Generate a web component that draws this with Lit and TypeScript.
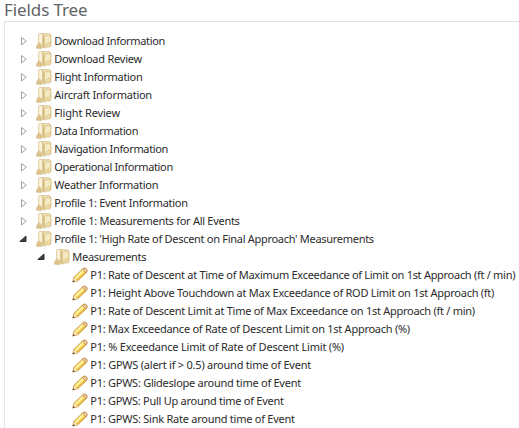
import { LitElement, html, svg, css } from 'lit';
import { customElement } from 'lit/decorators.js';

type Row = { level: number; kind: 'closed' | 'open' | 'leaf'; text: string; spacing: number };

const closed = (text: string, spacing: number): Row => ({ level: 0, kind: 'closed', text, spacing });
const leaf = (text: string, spacing: number): Row => ({ level: 2, kind: 'leaf', text, spacing });

const rows: Row[] = [
  closed('Download Information', -0.34),
  closed('Download Review', -0.23),
  closed('Flight Information', -0.33),
  closed('Aircraft Information', -0.26),
  closed('Flight Review', -0.16),
  closed('Data Information', -0.35),
  closed('Navigation Information', -0.34),
  closed('Operational Information', -0.34),
  closed('Weather Information', -0.27),
  closed('Profile 1: Event Information', -0.31),
  closed('Profile 1: Measurements for All Events', -0.28),
  { level: 0, kind: 'open', text: "Profile 1: 'High Rate of Descent on Final Approach' Measurements", spacing: -0.29 },
  { level: 1, kind: 'open', text: 'Measurements', spacing: -0.3 },
  leaf('P1: Rate of Descent at Time of Maximum Exceedance of Limit on 1st Approach (ft / min)', -0.285),
  leaf('P1: Height Above Touchdown at Max Exceedance of ROD Limit on 1st Approach (ft)', -0.27),
  leaf('P1: Rate of Descent Limit at Time of Max Exceedance on 1st Approach (ft / min)', -0.27),
  leaf('P1: Max Exceedance of Rate of Descent Limit on 1st Approach (%)', -0.26),
  leaf('P1: % Exceedance Limit of Rate of Descent Limit (%)', -0.21),
  leaf('P1: GPWS (alert if > 0.5) around time of Event', -0.23),
  leaf('P1: GPWS: Glideslope around time of Event', -0.26),
  leaf('P1: GPWS: Pull Up around time of Event', -0.27),
  leaf('P1: GPWS: Sink Rate around time of Event', -0.25),
];

const arrow = (kind: Row['kind']) =>
  kind === 'closed'
    ? svg`<path d="M3.5 4.5V12L8.2 8.2Z" fill="#fff" stroke="#a0a0a0"/>`
    : kind === 'open'
      ? svg`<path d="M8 5V10.5H1.8Z" fill="#404040" stroke="#222" stroke-width=".9"/>`
      : null;

const folder = html`<svg class="icon" viewBox="0 0 16 16">
  <path d="M2.5 1.2L3.5 .5H8V14L5 15.3H2.5Z" fill="#f0e2b7" stroke="#d8c695" stroke-width=".7"/>
  <path d="M3.3 1.4H6.3V11H3.3Z" fill="#fbf4dc"/>
  <path d="M.5 15.3V13.2L2.2 10.2H4.2L5.4 12.5V15.3Z" fill="#dcc48a" stroke="#cfb67d" stroke-width=".5"/>
  <path d="M6.6 .7H13.4L14.9 1.8V12.8L13.6 13.7H6.6Z" fill="#f0e2b6" stroke="#d0b980" stroke-width=".7"/>
  <path d="M6.8 2L8.6 3.2V15.2L6.8 14Z" fill="#d8c186"/>
  <path d="M8.6 3.4L9.8 2.7H14.8V12.9L13.5 14H10.5L8.6 15.4Z" fill="#e9d7a1" stroke="#d3bc82" stroke-width=".5"/>
  <path d="M9.1 3.8L10 3.2H14.2V8L9.1 10.5Z" fill="#f5eac6"/>
</svg>`;

const pencil = html`<svg class="icon" viewBox="0 0 16 16">
  <path d="M.9 14.9L1.9 10.3L10.6 2Q12.6.2 14.4 1.9Q16 3.6 14.3 5.7L5.7 13.8Z" fill="#f7cf50" stroke="#c08a3c" stroke-width=".8"/>
  <path d="M2.9 10.4L10.6 3.1L12.2 4.5L4.4 11.9Z" fill="#fff3a2"/>
  <path d="M5 13.2L13.2 5.5" stroke="#e8b03a" stroke-width=".9"/>
  <path d="M10.7 2.1L11.9 1.2Q13.2.7 14.4 1.9Q15.5 3.2 14.6 5L13.7 6Z" fill="#f3c7a2" stroke="#b9854c" stroke-width=".7"/>
  <path d="M1.2 14.6L2.1 10.9L3.8 11.8L5.2 13.7Z" fill="#f7e3c0"/>
  <path d="M.5 15.4L1.2 12.9L3.1 14.6Z" fill="#6e533a"/>
</svg>`;

@customElement('app-root')
export class AppRoot extends LitElement {
  static styles = css`
    :host { display: block; height: 428px; overflow: hidden; background: #fff; font-family: 'Noto Sans', sans-serif; }
    .page { display: flex; flex-direction: column; height: 428px; }
    h1 { margin: 0; padding-left: 4px; height: 21px; flex: none; font-size: 17px; line-height: 20px; font-weight: 400; letter-spacing: -0.1px; color: #626366; white-space: nowrap; }
    .panel { flex: 1; min-height: 0; margin-left: 4px; padding: 10px 0 0 13px; border-top: 1px solid #dfdfdf; border-left: 1px solid #e6e6e6; overflow: hidden; }
    .row { display: flex; align-items: center; height: 18px; white-space: nowrap; }
    .level-1 { padding-left: 18px; }
    .level-2 { padding-left: 36px; }
    .arrow { width: 16px; height: 16px; margin-right: 2px; flex: none; }
    .icon { width: 16px; height: 16px; flex: none; }
    .label { margin-left: 2.3px; font-size: 11px; line-height: 18px; color: #2b2b2b; }
  `;

  render() {
    return html`<div class="page">
      <h1>Fields Tree</h1>
      <div class="panel">
        ${rows.map(r => html`<div class="row level-${r.level}">
          <svg class="arrow" viewBox="0 0 16 16">${arrow(r.kind)}</svg>
          ${r.kind === 'leaf' ? pencil : folder}
          <span class="label" style="letter-spacing:${r.spacing}px">${r.text}</span>
        </div>`)}
      </div>
    </div>`;
  }
}
